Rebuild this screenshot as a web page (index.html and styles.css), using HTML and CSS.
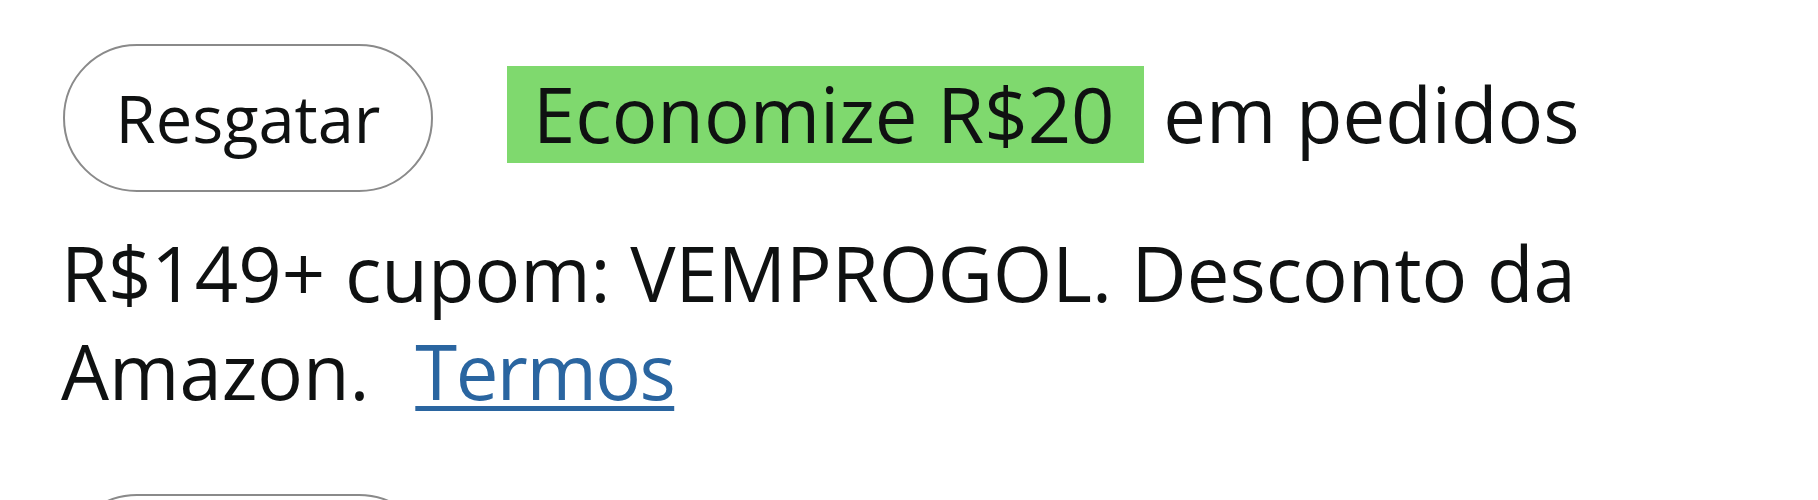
FILE: index.html
```html
<!DOCTYPE html>
<html lang="pt-BR">
<head>
<meta charset="utf-8">
<title>Cupons</title>
<link rel="stylesheet" href="styles.css">
</head>
<body>
<main class="coupons">
  <section class="coupon">
    <p class="coupon-text"><button class="redeem" type="button">Resgatar</button><span class="saving">Economize R$20</span> em pedidos R$149+ cupom: VEMPROGOL. Desconto da Amazon. <a class="terms" href="#">Termos</a></p>
  </section>
  <section class="coupon">
    <p class="coupon-text"><button class="redeem" type="button">Resgatar</button></p>
  </section>
</main>
</body>
</html>
```
FILE: styles.css
```css
html, body {
  margin: 0;
  padding: 0;
  background: #ffffff;
}

.coupons {
  display: flex;
  flex-direction: column;
  gap: 74px;
  padding: 44px 58px 0 61px;
}

.coupon-text {
  margin: 0;
  font-family: "Open Sans", "Noto Sans", sans-serif;
  font-size: 76px;
  line-height: 98px;
  color: #0f1111;
}

.redeem {
  display: inline-block;
  box-sizing: border-box;
  width: 370px;
  height: 148px;
  margin: 0 0 32px 2px;
  padding: 0;
  border: 2px solid #8a8a8a;
  border-radius: 74px;
  background: #ffffff;
  font-family: "Open Sans", "Noto Sans", sans-serif;
  font-size: 65px;
  line-height: 142px;
  color: #0f1111;
  text-align: center;
  vertical-align: baseline;
}

.saving {
  display: inline-block;
  margin-left: 74px;
  padding: 0 29px 2px 26px;
  line-height: 95px;
  background: #7fd96e;
}

.terms {
  margin-left: 26px;
  color: #2a65a0;
  letter-spacing: -1.5px;
  text-decoration: underline;
  text-decoration-thickness: 5px;
  text-underline-offset: 6px;
}
```
